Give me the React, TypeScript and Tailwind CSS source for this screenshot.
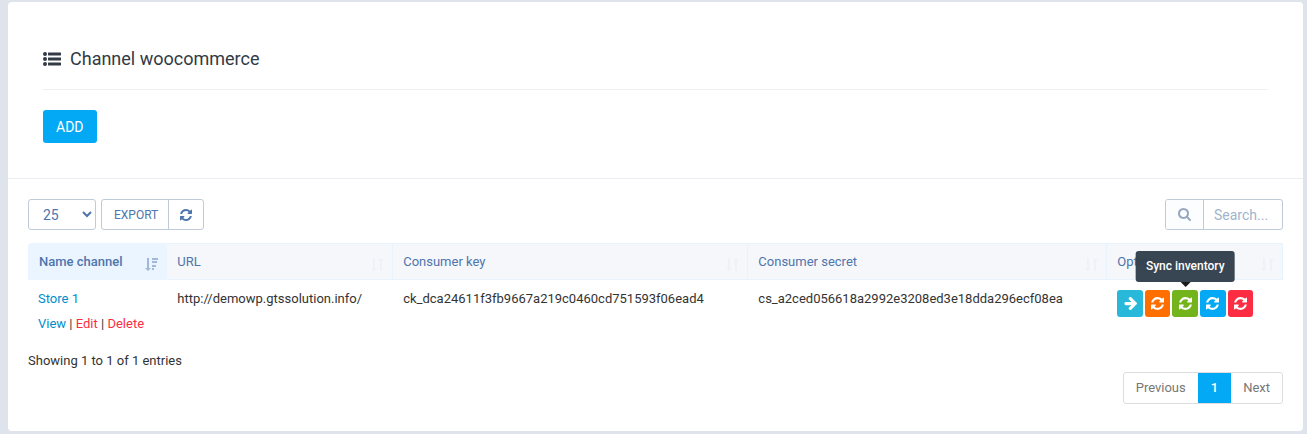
import { useState } from "react";

const columns = [
  { label: "URL", width: "w-[18%]" },
  { label: "Consumer key", width: "w-[28.3%]" },
  { label: "Consumer secret", width: "w-[28.6%]" },
  { label: "Option", width: "w-[14%]" },
];

const channels = [
  {
    name: "Store 1",
    url: "http://demowp.gtssolution.info/",
    consumerKey: "ck_dca24611f3fb9667a219c0460cd751593f06ead4",
    consumerSecret: "cs_a2ced056618a2992e3208ed3e18dda296ecf08ea",
  },
];

const syncActions = [
  { label: "Sync products", color: "bg-[#ff6f00]" },
  { label: "Sync inventory", color: "bg-[#73b41d]", tooltip: true },
  { label: "Sync orders", color: "bg-[#03a9f4]" },
  { label: "Sync all", color: "bg-[#fc2d42]" },
];

const RefreshIcon = ({ className }: { className?: string }) => (
  <svg viewBox="128 128 1536 1536" fill="currentColor" className={className} aria-hidden="true">
    <path d="M1639 1056q0 5-1 7-64 268-268 434.5t-478 166.5q-146 0-282.5-55t-243.5-157l-129 129q-19 19-45 19t-45-19-19-45v-448q0-26 19-45t45-19h448q26 0 45 19t19 45-19 45l-137 137q71 66 161 102t187 36q134 0 250-65t186-179q11-17 53-117 8-23 30-23h192q13 0 22.5 9.5t9.5 22.5zm25-800v448q0 26-19 45t-45 19h-448q-26 0-45-19t-19-45 19-45l138-138q-148-137-349-137-134 0-250 65t-186 179q-11 17-53 117-8 23-30 23h-199q-13 0-22.5-9.5t-9.5-22.5v-7q65-268 270-434.5t480-166.5q146 0 284 55.5t245 156.5l130-129q19-19 45-19t45 19 19 45z" />
  </svg>
);

const ArrowRightIcon = () => (
  <svg width="13" height="13" viewBox="64 192 1536 1536" fill="currentColor" aria-hidden="true">
    <path d="M1600 960q0 54-37 91l-651 651q-39 37-91 37-51 0-90-37l-75-75q-38-38-38-91t38-91l293-293h-704q-52 0-84.5-37.5t-32.5-90.5v-128q0-53 32.5-90.5t84.5-37.5h704l-293-294q-38-36-38-90t38-90l75-75q38-38 90-38 53 0 91 38l651 651q37 35 37 90z" />
  </svg>
);

const ListIcon = () => (
  <svg width="18" height="14" viewBox="0 0 18 14" fill="currentColor" aria-hidden="true">
    <circle cx="2" cy="2" r="2" />
    <circle cx="2" cy="7" r="2" />
    <circle cx="2" cy="12" r="2" />
    <rect x="5" y="0.5" width="13" height="3" rx="0.4" />
    <rect x="5" y="5.5" width="13" height="3" rx="0.4" />
    <rect x="5" y="10.5" width="13" height="3" rx="0.4" />
  </svg>
);

const SearchIcon = () => (
  <svg width="13" height="13" viewBox="64 128 1664 1664" fill="currentColor" aria-hidden="true">
    <path d="M1216 832q0-185-131.5-316.5t-316.5-131.5-316.5 131.5-131.5 316.5 131.5 316.5 316.5 131.5 316.5-131.5 131.5-316.5zm512 832q0 52-38 90t-90 38q-54 0-90-38l-343-342q-179 124-399 124-143 0-273.5-55.5t-225-150-150-225-55.5-273.5 55.5-273.5 150-225 225-150 273.5-55.5 273.5 55.5 225 150 150 225 55.5 273.5q0 220-124 399l343 343q37 37 37 90z" />
  </svg>
);

const SortIcon = () => (
  <svg width="13" height="13" viewBox="0 0 13 13" fill="currentColor" aria-hidden="true">
    <path d="M2 0h2v10h2L3 13 0 10h2zM9 13h2V3h2L10 0 7 3h2z" />
  </svg>
);

const SortAscIcon = () => (
  <svg width="13" height="13" viewBox="0 0 13 13" fill="currentColor" aria-hidden="true">
    <path d="M2 0h2v10h2L3 13 0 10h2zM7 0h6v2H7zM7 3h5v2H7zM7 7h4v2H7zM7 10h2v2H7z" />
  </svg>
);

const App = () => {
  const [pageSize, setPageSize] = useState("25");
  const [search, setSearch] = useState("");

  return (
    <div className="bg-[#dfe3eb] pt-[2px] pr-1 pb-[3px] pl-2 font-['Roboto',sans-serif] text-[13px] leading-5 text-[#333333]">
      <main className="rounded bg-white">
        {/* Heading */}
        <section className="border-b border-[#ebedf2] px-[35px] pt-[45px] pb-[35px]">
          <h1 className="flex items-center gap-[9px] border-b border-[#f0f0f0] pb-[18px] text-lg leading-6 text-[#323a45]">
            <ListIcon />
            Channel woocommerce
          </h1>
          <a
            href="#add"
            className="mt-5 inline-flex h-[33px] items-center rounded-[3px] bg-[#03a9f4] px-[13px] text-sm text-white"
          >
            ADD
          </a>
        </section>

        <section className="px-5 pt-5 pb-[27px]">
          {/* Toolbar */}
          <div className="flex items-center justify-between">
            <div className="flex gap-[5px] text-[#4e75ad]">
              <select
                aria-label="Entries per page"
                value={pageSize}
                onChange={(e) => setPageSize(e.target.value)}
                className="h-[31px] w-[68px] rounded-[3px] border border-[#bfcbd9] bg-white pl-[10px] text-sm"
              >
                <option>10</option>
                <option>25</option>
                <option>50</option>
                <option>100</option>
              </select>
              <div className="flex h-[31px] rounded-[3px] border border-[#bfcbd9]">
                <button type="button" className="border-r border-[#bfcbd9] pr-[10px] pl-3 text-xs">
                  EXPORT
                </button>
                <button type="button" aria-label="Reload" className="px-[11px]">
                  <RefreshIcon className="size-3" />
                </button>
              </div>
            </div>

            <label className="flex h-[31px] overflow-hidden rounded-[3px] border border-[#bfcbd9]">
              <span className="flex w-[38px] items-center justify-center border-r border-[#bfcbd9] bg-[#fbfdff] text-[#97a8be]">
                <SearchIcon />
              </span>
              <input
                type="text"
                aria-label="Search"
                placeholder="Search..."
                value={search}
                onChange={(e) => setSearch(e.target.value)}
                className="w-[78px] px-[10px] text-sm outline-none placeholder:text-[#a1b4cc]"
              />
            </label>
          </div>

          {/* Channels */}
          <table className="mt-[13px] w-full table-fixed border-separate border-spacing-0 text-left">
            <thead>
              <tr className="h-[37px] text-[#4e75ad]">
                <th className="w-[11.1%] rounded-tl-sm border-y border-[#ebf5ff] bg-[#ebf5ff] pr-[9px] pl-[11px] font-medium">
                  <div className="flex items-center justify-between">
                    Name channel
                    <span className="pt-[5px] text-[#a1b8da]">
                      <SortAscIcon />
                    </span>
                  </div>
                </th>
                {columns.map((col) => (
                  <th
                    key={col.label}
                    className={`border-t border-r border-b border-[#e7f3fe] bg-[#f6f7fa] pr-2 pl-[10px] font-normal ${col.width}`}
                  >
                    <div className="flex items-center justify-between">
                      {col.label}
                      <span className="pt-[5px] text-[#eef1f6]">
                        <SortIcon />
                      </span>
                    </div>
                  </th>
                ))}
              </tr>
            </thead>
            <tbody>
              {channels.map((channel) => (
                <tr key={channel.name} className="align-top">
                  <td className="px-[10px] pt-[9px] pb-[7px]">
                    <a href="#store" className="text-[#008ece]">
                      {channel.name}
                    </a>
                    <div className="mt-[5px] whitespace-nowrap">
                      <a href="#view" className="text-[#008ece]">View</a> |{" "}
                      <a href="#edit" className="text-[#fc2d42]">Edit</a> |{" "}
                      <a href="#delete" className="text-[#fc2d42]">Delete</a>
                    </div>
                  </td>
                  <td className="px-[10px] pt-[9px]">{channel.url}</td>
                  <td className="px-[10px] pt-[9px]">{channel.consumerKey}</td>
                  <td className="px-[10px] pt-[9px]">{channel.consumerSecret}</td>
                  <td className="pt-[10px] pl-[10px]">
                    <div className="grid w-[136px] grid-cols-5 gap-[2px] text-white">
                      <button
                        type="button"
                        aria-label="Test connection"
                        className="flex h-[27px] w-full items-center justify-center rounded-[3px] bg-[#28b8da]"
                      >
                        <ArrowRightIcon />
                      </button>
                      {syncActions.map((action) => (
                        <div key={action.label} className="relative">
                          <button
                            type="button"
                            aria-label={action.label}
                            className={`flex h-[27px] w-full items-center justify-center rounded-[3px] ${action.color}`}
                          >
                            <RefreshIcon className="size-[13px]" />
                          </button>
                          {action.tooltip && (
                            <div
                              role="tooltip"
                              className="absolute bottom-full left-1/2 mb-[3px] flex -translate-x-1/2 flex-col items-center"
                            >
                              <span className="rounded-[3px] bg-[#323f4c]/97 px-[10px] py-[6px] text-xs leading-[19px] font-medium whitespace-nowrap">
                                {action.label}
                              </span>
                              <span className="border-x-[5px] border-t-[5px] border-x-transparent border-t-[#1b1b1b]" />
                            </div>
                          )}
                        </div>
                      ))}
                    </div>
                  </td>
                </tr>
              ))}
            </tbody>
          </table>

          {/* Footer */}
          <p className="mt-[10px]">Showing 1 to 1 of 1 entries</p>
          <nav
            aria-label="Pagination"
            className="mt-px ml-auto flex h-8 w-fit overflow-hidden rounded-[3px] border border-[#dddddd] text-[#777777]"
          >
            <a href="#previous" className="px-3 py-[5px]">Previous</a>
            <a href="#1" aria-current="page" className="-my-px bg-[#03a9f4] px-[13px] py-[6px] font-medium text-white">1</a>
            <a href="#next" className="px-3 py-[5px]">Next</a>
          </nav>
        </section>
      </main>
    </div>
  );
};

export default App;
